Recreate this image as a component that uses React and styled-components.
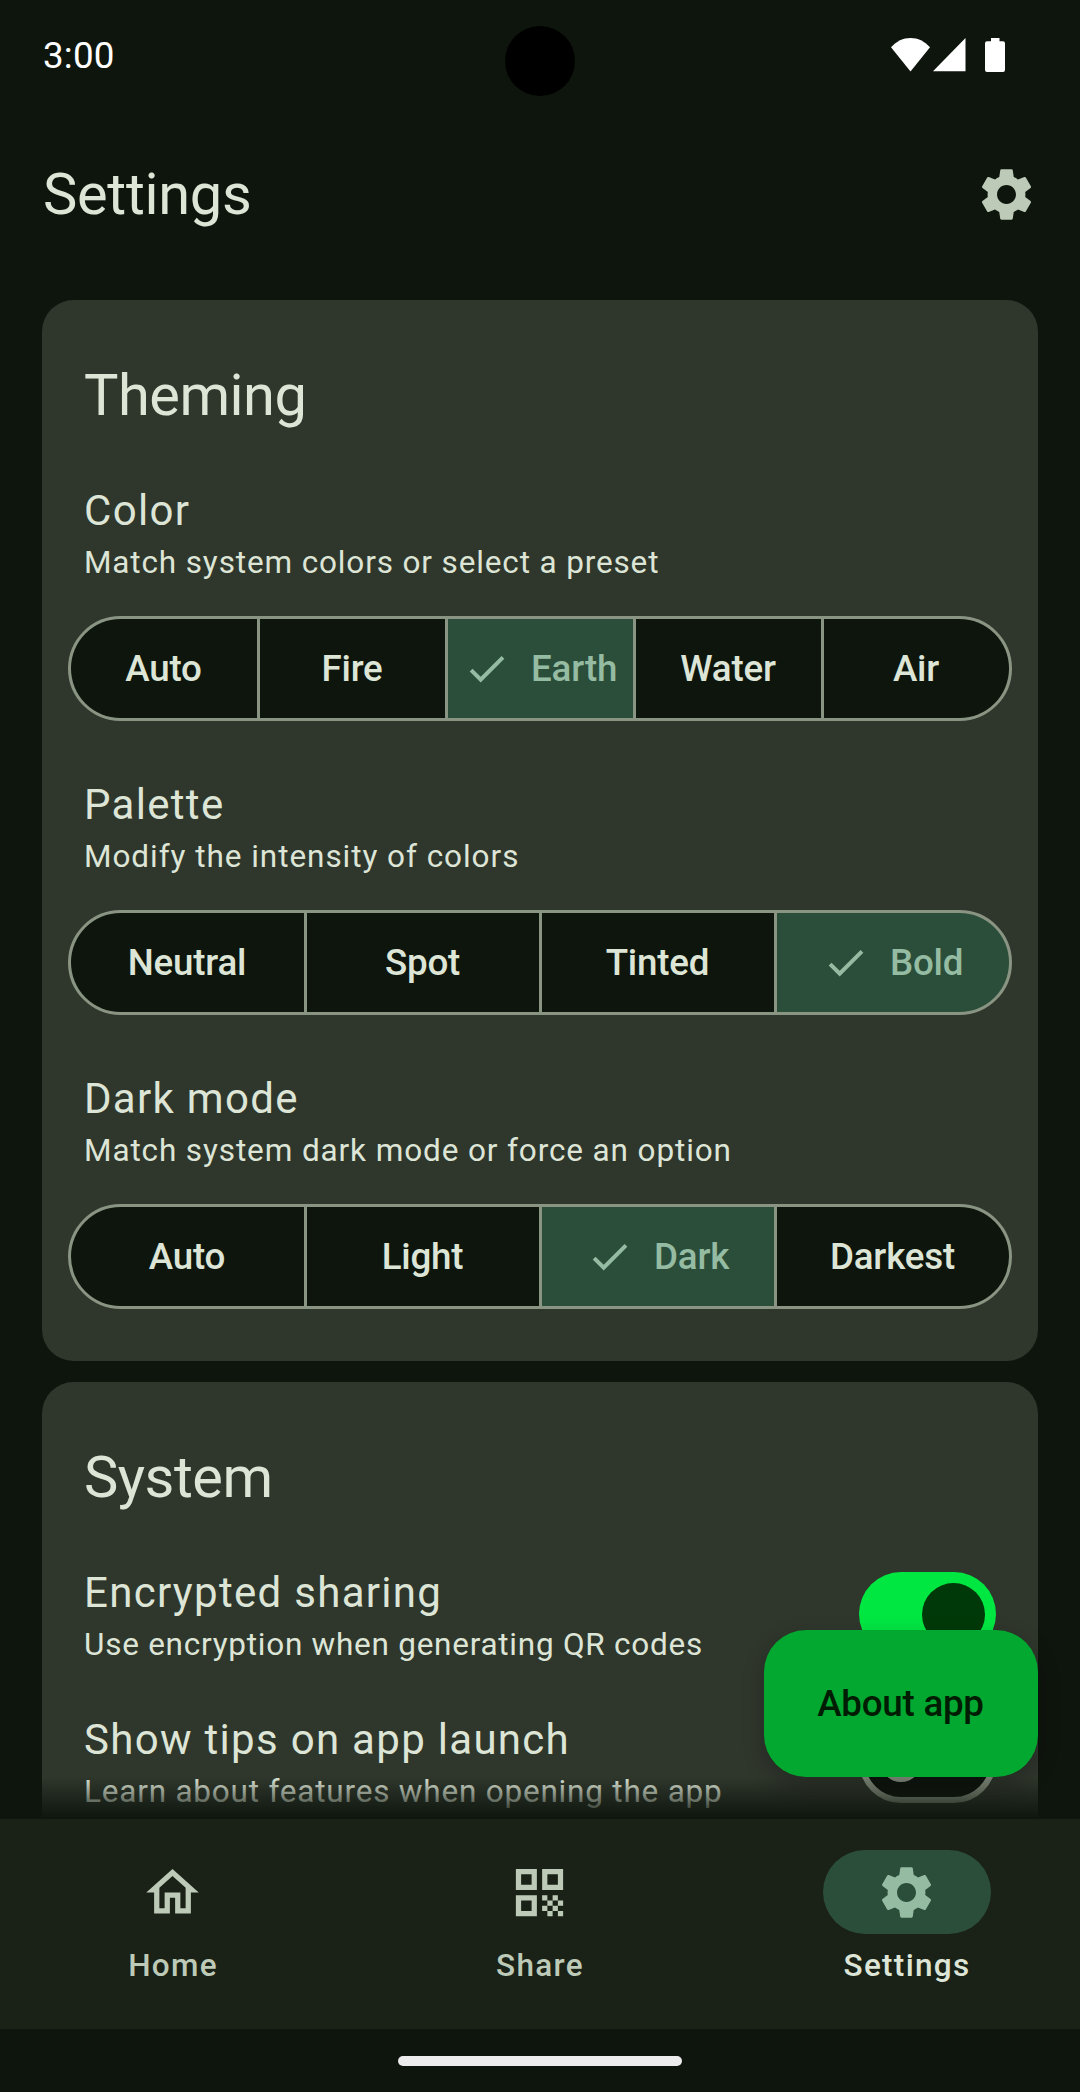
import React from "react";
import styled, { createGlobalStyle } from "styled-components";
import { MdSettings, MdOutlineHome, MdQrCode, MdCheck } from "react-icons/md";

const c = {
  bg: "#0e150d",
  card: "#2f362c",
  nav: "#1a2117",
  text: "#dde5d6",
  muted: "#bdcab8",
  outline: "#899483",
  selected: "#2b4e3a",
  onSelected: "#95bca2",
  primary: "#00e742",
  onPrimary: "#003909",
  fab: "#02a82f",
  onFab: "#001c03",
};

const GlobalStyle = createGlobalStyle`
  *, *::before, *::after { box-sizing: border-box; }
  body {
    margin: 0;
    background: ${c.bg};
    font-family: Roboto, "Liberation Sans", sans-serif;
    color: ${c.text};
  }
  h1, h2, h3, p { margin: 0; font-weight: 400; }
  svg { display: block; flex: none; }
`;

const Screen = styled.div`
  position: relative;
  width: 1080px;
  height: 2092px;
  display: flex;
  flex-direction: column;
  overflow: hidden;
  background: ${c.bg};
`;

const StatusBar = styled.div`
  height: 110px;
  flex: none;
  padding: 0 75px 0 43px;
  display: flex;
  align-items: center;
  justify-content: space-between;
  color: #fff;
`;

const Clock = styled.span`
  padding-top: 2px;
  font-size: 36.75px;
  line-height: 54px;
  letter-spacing: 0.2px;
`;

const StatusIcons = styled.div`
  display: flex;
  align-items: flex-start;
  height: 34px;
`;

const Signal = styled.svg`
  margin: 0 19px 0 3px;
`;

const Camera = styled.div`
  position: absolute;
  top: 26px;
  left: 505px;
  width: 70px;
  height: 70px;
  border-radius: 50%;
  background: #000;
`;

const AppBar = styled.header`
  height: 168px;
  flex: none;
  padding: 0 42px 0 43px;
  display: flex;
  align-items: center;
  justify-content: space-between;
`;

const PageTitle = styled.h1`
  font-size: 57.75px;
  line-height: 74px;
  letter-spacing: -0.3px;
`;

const IconButton = styled.button`
  border: 0;
  padding: 0;
  background: none;
  color: ${c.muted};
`;

const Content = styled.main`
  position: relative;
  flex: 1;
  min-height: 0;
  overflow: hidden;
  padding: 22px 42px 0;
  display: flex;
  flex-direction: column;
  gap: 21px;
`;

const Card = styled.section`
  flex: none;
  padding: 58px 26px 52px;
  border-radius: 31.5px;
  background: ${c.card};
`;

const CardTitle = styled.h2`
  padding: 0 16px;
  margin-bottom: 47px;
  font-size: 57.75px;
  line-height: 74px;
  letter-spacing: -0.5px;
`;

const Settings = styled.div`
  display: flex;
  flex-direction: column;
  gap: ${(p) => p.$gap}px;
`;

const Labels = styled.div`
  padding: 0 16px;
`;

const Label = styled.h3`
  font-size: 42px;
  line-height: 63px;
  letter-spacing: 1.3px;
`;

const Description = styled.p`
  font-size: 31.5px;
  line-height: 42px;
  letter-spacing: ${(p) => p.$tracking}px;
`;

const Segments = styled.div`
  margin-top: 32px;
  height: 105px;
  display: flex;
  overflow: hidden;
  border: 3px solid ${c.outline};
  border-radius: 52.5px;
  background: ${c.outline};
  gap: 3px;
`;

const Segment = styled.button`
  flex: 1 1 1px;
  min-width: 0;
  border: 0;
  padding: 0 1px 0 0;
  display: flex;
  align-items: center;
  justify-content: center;
  gap: 21px;
  font: 500 36.75px/52px Roboto, "Liberation Sans", sans-serif;
  letter-spacing: -0.2px;
  white-space: nowrap;
  color: ${(p) => (p.$on ? c.onSelected : c.text)};
  background: ${(p) => (p.$on ? c.selected : c.bg)};

  &:first-child {
    flex-basis: 2px;
  }
`;

const SwitchRow = styled.div`
  display: flex;
  align-items: center;
  justify-content: space-between;
  padding-right: 16px;
`;

const Track = styled.div`
  width: 137px;
  height: 84px;
  margin-top: 1px;
  border-radius: 42px;
  display: flex;
  align-items: center;
  justify-content: ${(p) => (p.$on ? "flex-end" : "flex-start")};
  padding: ${(p) => (p.$on ? "1px 11px 0" : "0 15px")};
  border: ${(p) => (p.$on ? "0" : `6px solid ${c.outline}`)};
  background: ${(p) => (p.$on ? c.primary : c.bg)};
`;

const Thumb = styled.div`
  width: ${(p) => (p.$on ? 63 : 42)}px;
  height: ${(p) => (p.$on ? 63 : 42)}px;
  border-radius: 50%;
  background: ${(p) => (p.$on ? c.onPrimary : c.outline)};
`;

const BottomFade = styled.div`
  position: absolute;
  left: 0;
  right: 0;
  bottom: 0;
  height: 42px;
  background: linear-gradient(rgba(14, 21, 13, 0), ${c.bg});
`;

const Fab = styled.button`
  position: absolute;
  right: 42px;
  bottom: 42px;
  width: 274px;
  height: 147px;
  border: 0;
  padding: 0 1px 0 0;
  border-radius: 42px;
  background: ${c.fab};
  color: ${c.onFab};
  font: 500 36.75px/52px Roboto, "Liberation Sans", sans-serif;
  letter-spacing: -0.25px;
  box-shadow: 0 8px 22px rgba(0, 0, 0, 0.22);
`;

const NavBar = styled.nav`
  height: 210px;
  flex: none;
  display: flex;
  gap: 21px;
  background: ${c.nav};
`;

const NavItem = styled.a`
  flex: 1 1 0;
  padding-top: 31px;
  display: flex;
  flex-direction: column;
  align-items: center;
  gap: 11px;
  font-size: 31.5px;
  line-height: 42px;
  font-weight: 500;
  letter-spacing: 1.3px;
  color: ${(p) => (p.$on ? c.text : c.muted)};
`;

const Indicator = styled.div`
  width: 168px;
  height: 84px;
  padding-right: 2px;
  border-radius: 42px;
  display: flex;
  align-items: center;
  justify-content: center;
  color: ${(p) => (p.$on ? c.onSelected : c.muted)};
  background: ${(p) => (p.$on ? c.selected : "transparent")};
`;

const GestureArea = styled.div`
  height: 63px;
  flex: none;
  display: flex;
  align-items: center;
  justify-content: center;
`;

const GestureHandle = styled.div`
  width: 284px;
  height: 10px;
  border-radius: 5px;
  background: #ececec;
`;

const choices = [
  {
    title: "Color",
    note: "Match system colors or select a preset",
    tracking: 0.86,
    options: ["Auto", "Fire", "Earth", "Water", "Air"],
    value: "Earth",
  },
  {
    title: "Palette",
    note: "Modify the intensity of colors",
    tracking: 0.95,
    options: ["Neutral", "Spot", "Tinted", "Bold"],
    value: "Bold",
  },
  {
    title: "Dark mode",
    note: "Match system dark mode or force an option",
    tracking: 0.88,
    options: ["Auto", "Light", "Dark", "Darkest"],
    value: "Dark",
  },
];

const switches = [
  {
    title: "Encrypted sharing",
    note: "Use encryption when generating QR codes",
    tracking: 0.74,
    on: true,
  },
  {
    title: "Show tips on app launch",
    note: "Learn about features when opening the app",
    tracking: 0.79,
    on: false,
  },
];

const tabs = [
  { name: "Home", Icon: MdOutlineHome },
  { name: "Share", Icon: MdQrCode },
  { name: "Settings", Icon: MdSettings, on: true },
];

function SettingLabels({ title, note, tracking }) {
  return (
    <Labels>
      <Label>{title}</Label>
      <Description $tracking={tracking}>{note}</Description>
    </Labels>
  );
}

export default function App() {
  return (
    <>
      <GlobalStyle />
      <Screen>
        <StatusBar>
          <Clock>3:00</Clock>
          <StatusIcons>
            <svg width="39" height="34" viewBox="0 0 39 34" fill="#fff">
              <path d="M19.5 33.5 0 9.3C5.500 3.200 12.200 0 19.500 0S33.500 3.200 39 9.300Z" />
            </svg>
            <Signal width="33" height="34" viewBox="0 0 33 34" fill="#fff">
              <path d="M0 33.200 32.500 0V33.200Z" />
            </Signal>
            <svg width="20" height="34" viewBox="0 0 20 34" fill="#fff">
              <path d="M6 0h8.500v3.300H18a2 2 0 0 1 2 2V32a2 2 0 0 1-2 2H2a2 2 0 0 1-2-2V5.300a2 2 0 0 1 2-2h4Z" />
            </svg>
          </StatusIcons>
        </StatusBar>
        <Camera />

        <AppBar>
          <PageTitle>Settings</PageTitle>
          <IconButton aria-label="Settings">
            <MdSettings size={63} />
          </IconButton>
        </AppBar>

        <Content>
          <Card>
            <CardTitle>Theming</CardTitle>
            <Settings $gap={52}>
              {choices.map((item) => (
                <div key={item.title}>
                  <SettingLabels title={item.title} note={item.note} tracking={item.tracking} />
                  <Segments>
                    {item.options.map((option) => (
                      <Segment key={option} $on={option === item.value}>
                        {option === item.value && <MdCheck size={47.25} />}
                        {option}
                      </Segment>
                    ))}
                  </Segments>
                </div>
              ))}
            </Settings>
          </Card>

          <Card>
            <CardTitle>System</CardTitle>
            <Settings $gap={42}>
              {switches.map((item) => (
                <SwitchRow key={item.title}>
                  <SettingLabels title={item.title} note={item.note} tracking={item.tracking} />
                  <Track $on={item.on}>
                    <Thumb $on={item.on} />
                  </Track>
                </SwitchRow>
              ))}
            </Settings>
          </Card>

          <BottomFade />
          <Fab>About app</Fab>
        </Content>

        <NavBar>
          {tabs.map(({ name, Icon, on }) => (
            <NavItem key={name} $on={on}>
              <Indicator $on={on}>
                <Icon size={63} />
              </Indicator>
              {name}
            </NavItem>
          ))}
        </NavBar>
        <GestureArea>
          <GestureHandle />
        </GestureArea>
      </Screen>
    </>
  );
}
